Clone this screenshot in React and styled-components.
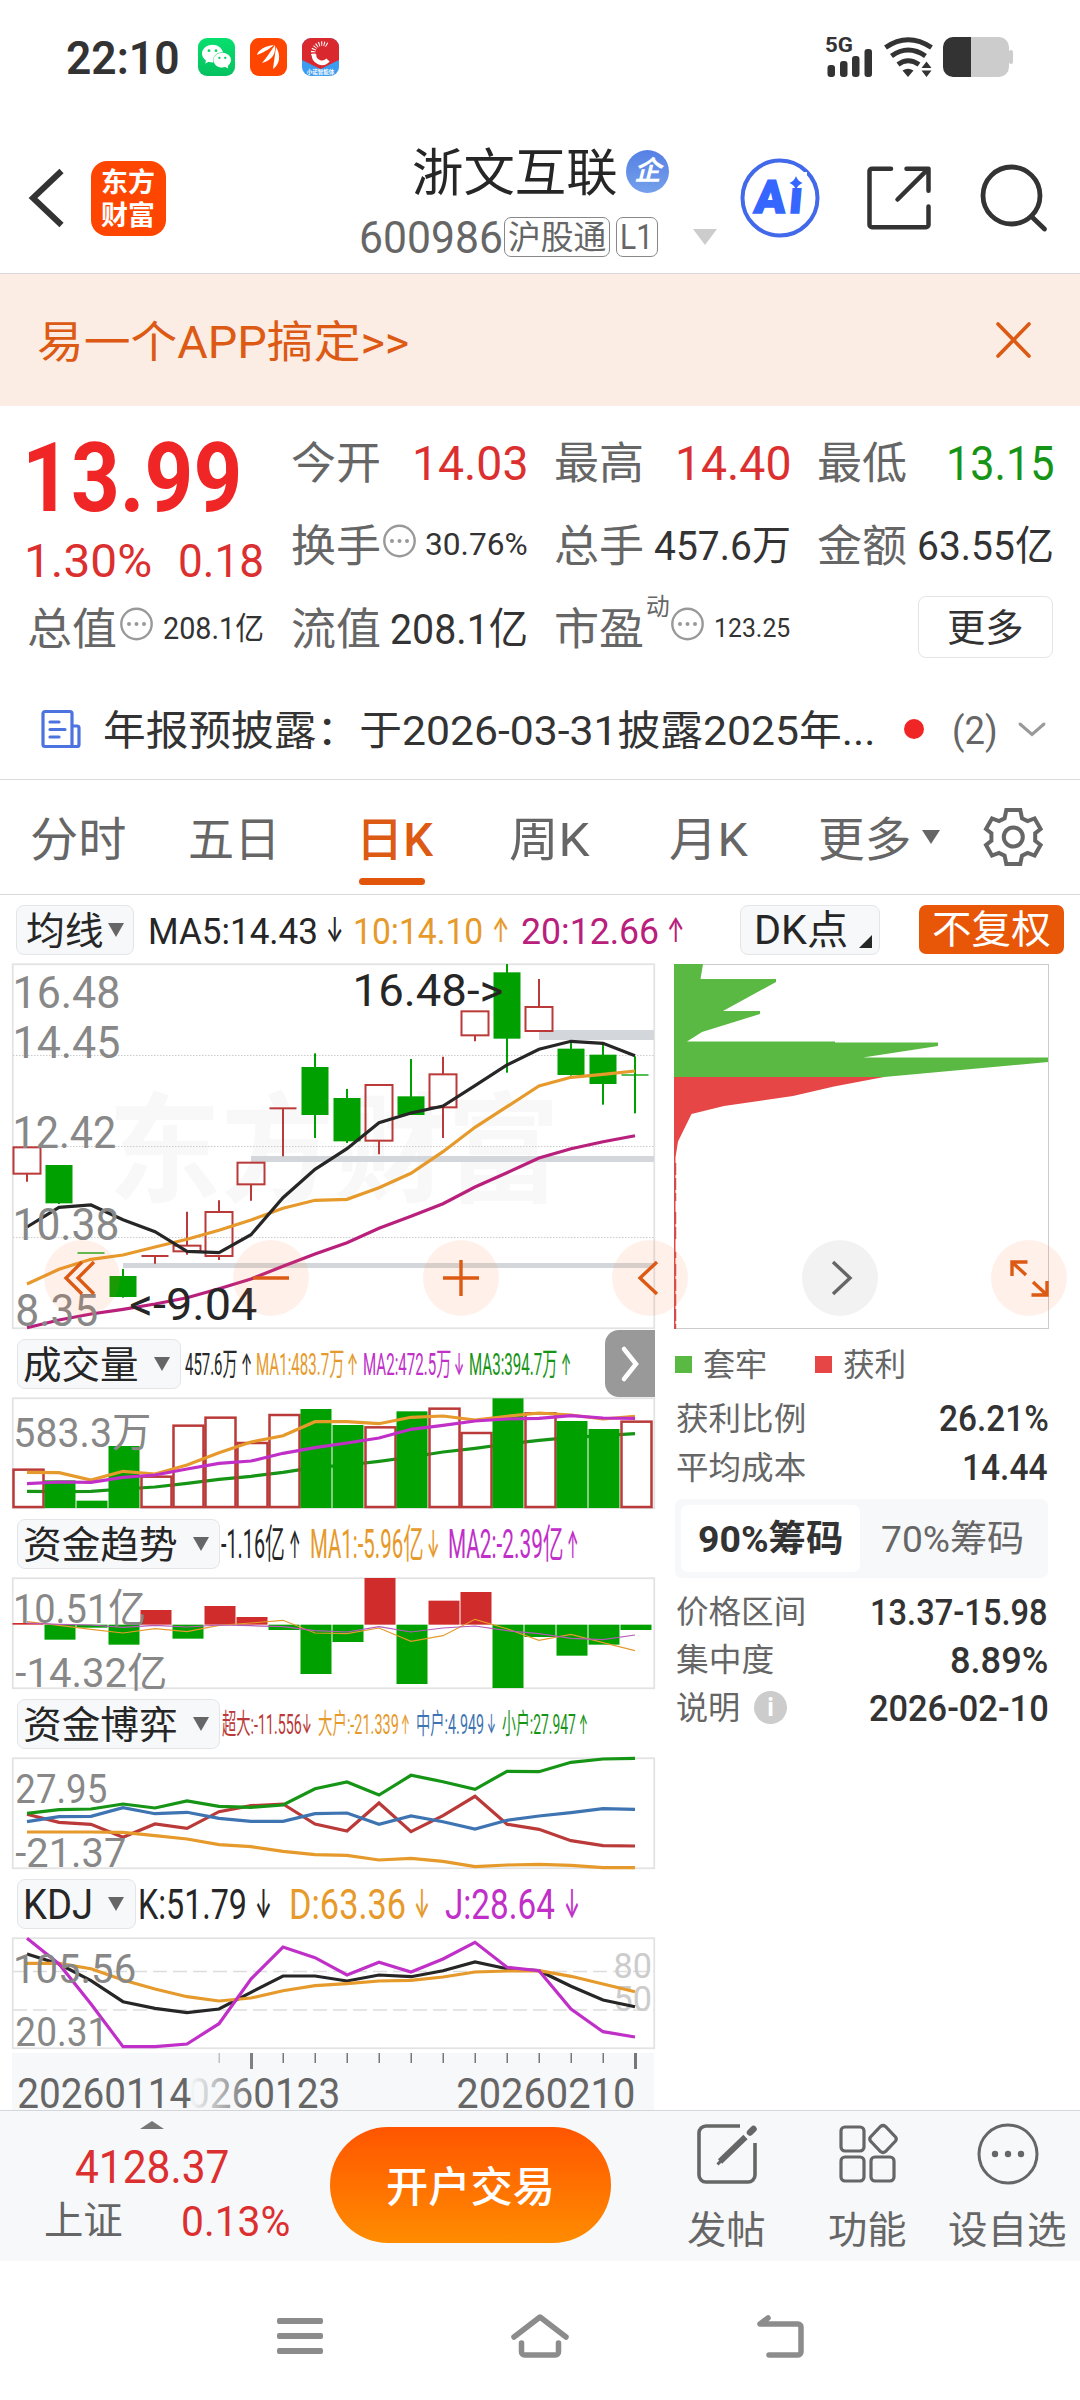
import React, { useLayoutEffect, useRef } from 'react'
import styled, { createGlobalStyle } from 'styled-components'
import { SiWechat } from 'react-icons/si'

const FONT = "Roboto, Inter, 'Noto Sans CJK SC', sans-serif"
const RED = '#dc2f2f'
const GREEN = '#169416'
const CANDLE_GREEN = '#00a000'
const CANDLE_RED = '#b93a38'
const ORANGE = '#e69a2b'
const PURPLE = '#c030c8'
const MAGENTA = '#b8207c'
const BLUE = '#3f74b3'
const DARK = '#262626'
const GREY = '#666'

const GlobalStyle = createGlobalStyle`
    body {
        margin: 0;
        background: #fff;
        font-family: ${FONT};
        color: #333;
    }
    svg {
        display: block;
        flex: none;
        overflow: visible;
    }
`

/* ---------- text that shrinks or grows to its slot ---------- */
const Slot = styled.span`
    display: block;
    flex: none;
    width: ${p => p.$w}px;
    margin-left: ${p => p.$ml || 0}px;
    margin-top: ${p => p.$mt || 0}px;
    font-size: ${p => p.$size}px;
    line-height: ${p => p.$lh || Math.round(p.$size * 1.1)}px;
    height: ${p => p.$lh || Math.round(p.$size * 1.1)}px;
    font-weight: ${p => p.$weight || 400};
    color: ${p => p.$color || 'inherit'};
    white-space: nowrap;
`
const SlotInner = styled.span`
    display: inline-block;
    transform-origin: 0 50%;
    margin-top: 1px;
    margin-left: ${p => p.$lead}em;
    vertical-align: top;
`
// a leading 1 carries a wider side bearing than the other glyphs
const Fit = ({ w, size, color, weight, ml, mt, lh, children }) => {
    const ref = useRef(null)
    const lead = String(children)[0] === '1' ? 0.1 : 0.04
    useLayoutEffect(() => {
        const el = ref.current
        el.style.transform = `scaleX(${(w + size * (lead + 0.03)) / el.offsetWidth})`
    }, [w, size, lead, children])
    return (
        <Slot $w={w} $size={size} $color={color} $weight={weight} $ml={ml} $mt={mt} $lh={lh}>
            <SlotInner ref={ref} $lead={-lead}>{children}</SlotInner>
        </Slot>
    )
}

const Page = styled.div`
    width: 1080px;
    height: 2400px;
    overflow: hidden;
    background: #fff;
    display: flex;
    flex-direction: column;
`

/* ---------- status bar ---------- */
const StatusBar = styled.div`
    display: flex;
    align-items: center;
    height: 114px;
    margin-bottom: 10px;
    padding-left: 68px;
`
const StatusApps = styled.div`
    display: flex;
    gap: 15px;
    margin-left: 20px;
`
const AppDot = styled.div`
    width: 37px;
    height: 38px;
    border-radius: 9px;
    overflow: hidden;
    background: ${p => p.$bg};
    color: #fff;
    display: flex;
    align-items: center;
    justify-content: center;
`
const StatusRight = styled.div`
    display: flex;
    align-items: center;
    gap: 10px;
    margin-left: 487px;
`

const Status = () => (
    <StatusBar>
        <Fit w={110} size={47} weight={600}>22:10</Fit>
        <StatusApps>
            <AppDot $bg='linear-gradient(#07e06e, #06c160)'><SiWechat size={29} /></AppDot>
            <AppDot $bg='#ff4600'>
                <svg width='37' height='38' viewBox='0 0 37 38' fill='#fff'>
                    <path d='M7 17c1-5 8-9 17-10-4 3-7 6-17 10z' />
                    <path d='M12 25c5-6 8-11 13-18 1 8-2 15-13 18z' />
                    <path d='M23 31c1-8 2-14 3-22 5 8 4 17-3 22z' />
                </svg>
            </AppDot>
            <AppDot $bg='#3c9cf0'>
                <svg width='37' height='38' viewBox='0 0 37 38'>
                    <path d='M0 0h37v22L18.500 31 0 22z' fill='#d9292f' />
                    <path d='M25 7a9 9 0 0 0-12 13' fill='none' stroke='#fff' strokeWidth='4.500' strokeDasharray='1 1.500' />
                    <path d='M12 16a8 8 0 0 0 14 6' fill='none' stroke='#fff' strokeWidth='4.500' />
                    <text x='18.500' y='36' fontSize='5.500' fontWeight='700' fill='#fff' textAnchor='middle'>小诺智能体</text>
                </svg>
            </AppDot>
        </StatusApps>
        <StatusRight>
            <svg width='48' height='40' viewBox='0 0 48 40' fill='#333'>
                <text x='-1' y='15' fontSize='21' fontWeight='700' textLength='28' lengthAdjust='spacingAndGlyphs'>5G</text>
                <rect x='1.500' y='28' width='7.500' height='12' rx='3' />
                <rect x='14' y='24' width='7.500' height='16' rx='3' />
                <rect x='26' y='19' width='7.500' height='21' rx='3' />
                <rect x='38.500' y='12' width='7.500' height='28' rx='3' />
            </svg>
            <svg width='49' height='40' viewBox='0 0 49 40' fill='none' stroke='#333' strokeWidth='5'>
                <path d='M1.500 10.500Q24 -5 47.500 10.500' />
                <path d='M7.500 19Q24 7 41.500 19' />
                <path d='M14 27.500Q24 20 35 27.500' />
                <path d='M18.500 33.500Q24 30 29.500 33.500L24 40z' fill='#333' stroke='none' />
                <path d='M37.500 31l5-6.500 5 6.500zM37.500 33.500l5 6.500 5-6.500z' fill='#333' stroke='none' />
            </svg>
            <svg width='71' height='40' viewBox='0 0 71 40'>
                <path d='M28 0h28a10 10 0 0 1 10 10v20a10 10 0 0 1-10 10h-28z' fill='#ccc' />
                <path d='M28 0h-18a10 10 0 0 0-10 10v20a10 10 0 0 0 10 10h18z' fill='#333' />
                <rect x='66' y='13' width='4' height='14' rx='2' fill='#ccc' />
            </svg>
        </StatusRight>
    </StatusBar>
)

/* ---------- title bar ---------- */
const TitleBar = styled.header`
    display: flex;
    align-items: center;
    height: 149px;
    padding-left: 30px;
    border-bottom: 1px solid #d9d9d9;
`
const BrandLogo = styled.div`
    display: flex;
    flex-direction: column;
    align-items: center;
    justify-content: center;
    gap: 1px;
    width: 75px;
    height: 75px;
    margin-left: 27px;
    border-radius: 16px;
    background: #ff4600;
`
const StockBlock = styled.div`
    width: 298px;
    margin-left: 195px;
    margin-top: 12px;
`
const StockLine = styled.div`
    display: flex;
    align-items: center;
    height: 65px;
    padding-left: ${p => p.$pl || 0}px;
`
const Verified = styled.span`
    flex: none;
    width: 43px;
    height: 43px;
    margin-left: 10px;
    border-radius: 50%;
    background: linear-gradient(#5680e4, #74a0ea);
    color: #fff;
    font-size: 27px;
    font-weight: 700;
    font-style: italic;
    line-height: 43px;
    text-align: center;
`
const Tag = styled.span`
    display: flex;
    align-items: center;
    justify-content: center;
    flex: none;
    box-sizing: border-box;
    width: ${p => p.$w}px;
    height: 40px;
    margin-left: ${p => p.$ml}px;
    border: 1.5px solid #888;
    border-radius: 7px;
`
const IconGroup = styled.div`
    display: flex;
    align-items: center;
    margin-left: ${p => p.$ml}px;
`

const Title = () => (
    <TitleBar>
        <svg width='34' height='60' viewBox='0 0 34 60'>
            <path d='M31.500 3L3 30l28.500 27' fill='none' stroke='#333' strokeWidth='6' />
        </svg>
        <BrandLogo>
            <Fit w={52} size={27} lh={32} weight={700} color='#fff'>东方</Fit>
            <Fit w={52} size={27} lh={32} weight={700} color='#fff'>财富</Fit>
        </BrandLogo>
        <StockBlock>
            <StockLine $pl={53}>
                <Fit w={202} size={51} color={DARK} mt={2}>浙文互联</Fit>
                <Verified>企</Verified>
            </StockLine>
            <StockLine>
                <Fit w={141} size={45} color={GREY}>600986</Fit>
                <Tag $w={106} $ml={2}><Fit w={96} size={33} color={GREY}>沪股通</Fit></Tag>
                <Tag $w={42} $ml={6}><Fit w={31} size={35} color={GREY}>L1</Fit></Tag>
            </StockLine>
        </StockBlock>
        <IconGroup $ml={24}>
            <svg width='34' height='93' viewBox='0 0 34 93'>
                <path d='M10 77h24l-12 16z' fill='#ccc' />
            </svg>
        </IconGroup>
        <IconGroup $ml={23}>
            <svg width='80' height='80' viewBox='0 0 80 80'>
                <circle cx='40' cy='40' r='37.500' fill='none' stroke='#4169ea' strokeWidth='4' />
                <text x='13' y='55' fontSize='46' fontWeight='900' fill='#3566ff' stroke='#3566ff' strokeWidth='1.500' textLength='48' transform='translate(5 0) skewX(-5)'>Ai</text>
                <rect x='49' y='14' width='18' height='15' fill='#fff' />
                <path d='M56 18q1.500 5 6.500 7-5 2-6.500 7-1.500-5-6.500-7 5-2 6.500-7z' fill='#3566ff' />
            </svg>
        </IconGroup>
        <IconGroup $ml={47}>
            <svg width='64' height='64' viewBox='0 0 64 64' fill='none' stroke='#333' strokeWidth='4.500' strokeLinecap='round' strokeLinejoin='round'>
                <path d='M24 2.700H5a2.500 2.500 0 0 0-2.500 2.500v53.500a2.500 2.500 0 0 0 2.500 2.500h54a2.500 2.500 0 0 0 2.500-2.500V40.500' />
                <path d='M39.500 2.700h22v22M61 3.200L30.500 33.500' />
            </svg>
        </IconGroup>
        <IconGroup $ml={49}>
            <svg width='68' height='68' viewBox='0 0 68 68' fill='none' stroke='#333' strokeWidth='4.800' strokeLinecap='round'>
                <circle cx='31.500' cy='31.500' r='28.500' />
                <path d='M52 53l12.500 12' />
            </svg>
        </IconGroup>
    </TitleBar>
)

/* ---------- banner ---------- */
const BannerBox = styled.div`
    display: flex;
    align-items: center;
    justify-content: space-between;
    height: 132px;
    padding: 0 49px 0 39px;
    background: #fcede4;
`
const Banner = () => (
    <BannerBox>
        <Fit w={369} size={44} color='#dc5a14' mt={5}>易一个APP搞定&gt;&gt;</Fit>
        <svg width='35' height='36' viewBox='0 0 35 36' stroke='#dc5a14' strokeWidth='3.600' strokeLinecap='round'>
            <path d='M2 2l31 32M33 2L2 34' />
        </svg>
    </BannerBox>
)

/* ---------- quote ---------- */
const QuoteBox = styled.section`
    display: flex;
    gap: 30px;
    box-sizing: border-box;
    height: 274px;
    padding: 14px 27px 0 29px;
`
const PriceCol = styled.div`
    width: 234px;
`
const PriceRow = styled.div`
    display: flex;
    align-items: center;
    height: ${p => p.$h}px;
`
const QuoteGrid = styled.div`
    display: grid;
    grid-template-columns: repeat(3, 234px);
    grid-auto-rows: 83px;
    column-gap: 29px;
`
const Cell = styled.div`
    display: flex;
    align-items: center;
    justify-content: ${p => p.$end ? 'flex-end' : 'flex-start'};
`
const Push = styled.div`
    flex: 1;
`
const MoreButton = styled.button`
    display: flex;
    align-items: center;
    justify-content: center;
    box-sizing: border-box;
    width: 135px;
    height: 62px;
    padding: 0;
    border: 1.5px solid #e4e4e4;
    border-radius: 8px;
    background: #fff;
    color: #333;
    font-family: inherit;
`
const DotsBox = styled.span`
    margin: -6px 0 0 ${p => p.$ml || 0}px;
`
const Dots = ({ ml }) => (
    <DotsBox $ml={ml}>
        <svg width='33' height='34' viewBox='0 0 33 34' fill='#999'>
            <circle cx='16.500' cy='17' r='15.200' fill='none' stroke='#999' strokeWidth='2.400' />
            <circle cx='9' cy='17' r='2' /><circle cx='16.500' cy='17' r='2' /><circle cx='24' cy='17' r='2' />
        </svg>
    </DotsBox>
)
const Label = ({ children }) => <Fit w={87} size={44} color={GREY} mt={4}>{children}</Fit>

const Quote = () => (
    <QuoteBox>
        <PriceCol>
            <PriceRow $h={114}><Fit w={208} size={97} weight={700} color='#f02525' ml={3} lh={110}>13.99</Fit></PriceRow>
            <PriceRow $h={52}>
                <Fit w={122} size={47} color={RED}>1.30%</Fit>
                <Push />
                <Fit w={83} size={47} color={RED}>0.18</Fit>
            </PriceRow>
            <PriceRow $h={83}>
                <Label>总值</Label><Dots ml={4} /><Push /><Fit w={99} size={31} mt={2}>208.1亿</Fit>
            </PriceRow>
        </PriceCol>
        <QuoteGrid>
            <Cell><Label>今开</Label><Push /><Fit w={110} size={49} color={RED} mt={3}>14.03</Fit></Cell>
            <Cell><Label>最高</Label><Push /><Fit w={110} size={49} color={RED} mt={3}>14.40</Fit></Cell>
            <Cell><Label>最低</Label><Push /><Fit w={102} size={49} color={GREEN} mt={3}>13.15</Fit></Cell>
            <Cell><Label>换手</Label><Dots ml={3} /><Push /><Fit w={101} size={31}>30.76%</Fit></Cell>
            <Cell><Label>总手</Label><Push /><Fit w={134} size={41} mt={3}>457.6万</Fit></Cell>
            <Cell><Label>金额</Label><Push /><Fit w={134} size={41} mt={3}>63.55亿</Fit></Cell>
            <Cell><Label>流值</Label><Push /><Fit w={135} size={43} mt={2}>208.1亿</Fit></Cell>
            <Cell>
                <Label>市盈</Label>
                <Fit w={22} size={24} color={GREY} ml={4} mt={-42}>动</Fit>
                <Push /><Dots /><Fit w={73} size={26} ml={13}>123.25</Fit>
            </Cell>
            <Cell $end><MoreButton><Fit w={74} size={38}>更多</Fit></MoreButton></Cell>
        </QuoteGrid>
    </QuoteBox>
)

/* ---------- notice ---------- */
const NoticeBox = styled.div`
    display: flex;
    align-items: center;
    height: 100px;
    padding-left: 41px;
    border-bottom: 1px solid #d9d9d9;
`
const RedDot = styled.span`
    width: 20px;
    height: 20px;
    margin: 0 30px 0 29px;
    border-radius: 50%;
    background: #f02525;
`
const Chevron = styled.span`
    margin-left: 21px;
`
const Notice = () => (
    <NoticeBox>
        <svg width='40' height='40' viewBox='0 0 40 40' fill='none' stroke='#4d73e0' strokeWidth='3.200' strokeLinejoin='round' strokeLinecap='round'>
            <path d='M37 37.500H4a2 2 0 0 1-2-2V4.500a2 2 0 0 1 2-2h25a2 2 0 0 1 2 2v33M31 17h5a2 2 0 0 1 2 2v16.500a2 2 0 0 1-2 2' />
            <path d='M9 13h9M9 20.500h15M9 28h9' />
        </svg>
        <Fit w={770} size={41} ml={24} mt={2}>年报预披露：于2026-03-31披露2025年...</Fit>
        <RedDot />
        <Fit w={43} size={39} color={GREY} mt={2}>(2)</Fit>
        <Chevron>
            <svg width='28' height='16' viewBox='0 0 28 16' fill='none' stroke='#999' strokeWidth='3' strokeLinecap='round'>
                <path d='M2 3l12 10.500L26 3' />
            </svg>
        </Chevron>
    </NoticeBox>
)

/* ---------- period tabs ---------- */
const TabsBox = styled.nav`
    display: flex;
    align-items: center;
    height: 114px;
    border-bottom: 1px solid #d9d9d9;
`
const TabItem = styled.div`
    position: relative;
    display: flex;
    align-items: center;
    margin-left: ${p => p.$ml}px;
    color: ${p => p.$active ? '#dc5a14' : GREY};
    font-weight: ${p => p.$active ? 500 : 400};
`
const Underline = styled.i`
    position: absolute;
    left: 1px;
    bottom: -20px;
    width: 66px;
    height: 7px;
    border-radius: 4px;
    background: #e2560c;
`
const TabTools = styled.div`
    display: flex;
    align-items: center;
    gap: 45px;
    margin-left: 12px;
`
const TABS = [
    { name: '分时', w: 93, ml: 32 },
    { name: '五日', w: 89, ml: 65 },
    { name: '日K', w: 74, ml: 79, active: true },
    { name: '周K', w: 78, ml: 79 },
    { name: '月K', w: 76, ml: 82 },
    { name: '更多', w: 90, ml: 73 },
]
const Tabs = () => (
    <TabsBox>
        {TABS.map(tab => (
            <TabItem key={tab.name} $ml={tab.ml} $active={tab.active}>
                <Fit w={tab.w} size={47} mt={4} weight={tab.active ? 500 : 400}>{tab.name}</Fit>
                {tab.active && <Underline />}
            </TabItem>
        ))}
        <TabTools>
            <svg width='18' height='14' viewBox='0 0 18 14'><path d='M0 0h18l-9 14z' fill='#666' /></svg>
            <svg width='57' height='58' viewBox='0 0 57 58' fill='none' stroke='#666' strokeWidth='4'>
                <path d='M21.300 2h14l1.700 8.300 5.600 2.800 7-2.600 6 10.500-5.400 4.300v7.400l5.400 4.300-6 10.500-7-2.600-5.600 2.800-1.700 8.300h-14l-1.700-8.300-5.600-2.800-7 2.600-6-10.500 5.400-4.300v-7.400l-5.400-4.300 6-10.500 7 2.600 5.600-2.800z' />
                <circle cx='28.300' cy='29' r='9.500' />
            </svg>
        </TabTools>
    </TabsBox>
)

/* ---------- indicator rows ---------- */
const IndicatorRow = styled.div`
    position: relative;
    display: flex;
    align-items: center;
    height: 69px;
    padding-left: ${p => p.$pl}px;
`
const Picker = styled.div`
    display: flex;
    align-items: center;
    flex: none;
    box-sizing: border-box;
    width: ${p => p.$w}px;
    height: 50px;
    margin-left: ${p => p.$ml || 0}px;
    padding-left: ${p => p.$pl || 7}px;
    border: 1.5px solid #e3e5e8;
    border-radius: 8px;
    background: #f7f8fa;
    color: ${DARK};
`
const Arrow = styled.span`
    margin-left: ${p => p.$ml}px;
`
const OrangeTag = styled.div`
    display: flex;
    align-items: center;
    justify-content: center;
    width: 145px;
    height: 49px;
    margin-left: 39px;
    border-radius: 7px;
    background: #e85608;
`
const SideTab = styled.div`
    position: absolute;
    right: 0;
    top: 1px;
    display: flex;
    align-items: center;
    justify-content: center;
    width: 50px;
    height: 67px;
    border-radius: 14px 0 0 14px;
    background: #999;
`
const Triangle = ({ ml }) => (
    <Arrow $ml={ml}>
        <svg width='16' height='14' viewBox='0 0 16 14'><path d='M0 0h16l-8 14z' fill='#666' /></svg>
    </Arrow>
)

const MaRow = () => (
    <IndicatorRow $pl={16}>
        <Picker $w={118} $pl={11}><Fit w={75} size={38}>均线</Fit><Triangle ml={5} /></Picker>
        <Fit w={167} size={37} color={DARK} ml={15} mt={1}>MA5:14.43</Fit>
        <Fit w={15} size={34} color={DARK} ml={11} weight={500}>↓</Fit>
        <Fit w={125} size={37} color={ORANGE} ml={15} mt={1}>10:14.10</Fit>
        <Fit w={15} size={34} color={ORANGE} ml={11} weight={500}>↑</Fit>
        <Fit w={135} size={37} color={MAGENTA} ml={14} mt={1}>20:12.66</Fit>
        <Fit w={15} size={34} color={MAGENTA} ml={11} weight={500}>↑</Fit>
        <Picker $w={140} $pl={15} $ml={57}>
            <Fit w={91} size={40}>DK点</Fit>
            <Arrow $ml={12}>
                <svg width='13' height='40' viewBox='0 0 13 40'><path d='M13 25v13H0z' fill='#262626' /></svg>
            </Arrow>
        </Picker>
        <OrangeTag><Fit w={116} size={39} color='#fff'>不复权</Fit></OrangeTag>
    </IndicatorRow>
)

// items: [text, text width, left gap, colour, arrow, arrow gap, arrow width]
const Indicator = ({ name, nameW, pickerW, gap, size, items, side }) => (
    <IndicatorRow $pl={5}>
        <Picker $w={pickerW}><Fit w={nameW} size={name === 'KDJ' ? 42 : 38}>{name}</Fit><Triangle ml={16} /></Picker>
        {items.map(([text, w, ml, color, arrow, aGap, aW], i) => (
            <React.Fragment key={text}>
                <Fit w={w} size={size} color={color} ml={i === 0 ? gap : ml}>{text}</Fit>
                <Fit w={aW} size={size * 0.95} color={color} ml={aGap} weight={500}>{arrow}</Fit>
            </React.Fragment>
        ))}
        {side && (
            <SideTab>
                <svg width='20' height='38' viewBox='0 0 20 38' fill='none' stroke='#fff' strokeWidth='4.500' strokeLinecap='round'>
                    <path d='M4 4l12 15L4 34' />
                </svg>
            </SideTab>
        )}
    </IndicatorRow>
)

/* ---------- charts ---------- */
// plot data is kept in thirds of a pixel, measured down from each panel's own origin
const PITCH = 32
const cx = i => 15 + PITCH * i
const points = (data, top) => data.map((v, i) => `${cx(i)},${((v - top) / 3).toFixed(1)}`).join(' ')
const Line = ({ data, top, color, w = 3.2 }) => (
    <polyline points={points(data, top)} fill='none' stroke={color} strokeWidth={w} />
)
const AxisText = ({ x = 5, y, w, size = 41, color = '#888', children }) => {
    const lead = String(children)[0] === '1' ? 0.1 : 0.04
    return (
        <text x={x - size * lead} y={y} fontSize={size} fill={color} textLength={w + size * (lead + 0.03)} lengthAdjust='spacingAndGlyphs'>{children}</text>
    )
}
const Frame = ({ h }) => <rect x='0.750' y='0.250' width='641.500' height={h - 1} fill='none' stroke='#e3e3e3' strokeWidth='1.800' />

// [direction, body top, body bottom, high, low]
const CANDLES = [
    ['r', 565, 644, 565, 668], ['g', 618, 733, 618, 735], ['g', 880, 884, 882, 882], ['g', 951, 1014, 930, 1016],
    ['r', 891, 891, 891, 914], ['r', 860, 877, 758, 887], ['r', 759, 891, 724, 903], ['r', 611, 676, 611, 725],
    ['r', 448, 448, 448, 592], ['g', 324, 468, 283, 537], ['g', 417, 547, 390, 552], ['r', 378, 545, 378, 586],
    ['g', 412, 468, 300, 468], ['r', 346, 445, 293, 537], ['r', 157, 229, 157, 247], ['g', 40, 239, 15, 341],
    ['r', 144, 216, 60, 216], ['g', 269, 348, 248, 350], ['g', 287, 375, 253, 437], ['g', 346, 350, 292, 463],
]
const MA5 = [804, 745, 738, 782, 818, 877, 881, 827, 716, 631, 569, 491, 462, 441, 380, 318, 271, 247, 253, 290]
const MA10 = [975, 931, 901, 888, 864, 841, 814, 783, 748, 724, 721, 686, 643, 578, 505, 443, 381, 355, 346, 336]
const MA20 = [1106, 1083, 1065, 1051, 1035, 1016, 989, 960, 922, 885, 851, 808, 772, 734, 684, 641, 597, 569, 548, 530]

const Candle = ({ i, c }) => {
    const [dir, top, bottom, high, low] = c
    const y = v => (v - 15) / 3
    const x = cx(i)
    if (dir === 'g') {
        return (
            <g fill={CANDLE_GREEN}>
                <rect x={x - 1} y={y(high)} width='2' height={y(low) - y(high)} />
                <rect x={x - 13.5} y={y(top)} width='27' height={y(bottom) - y(top)} />
            </g>
        )
    }
    return (
        <g fill='none' stroke={CANDLE_RED} strokeWidth='2'>
            <path d={`M${x} ${y(high)}V${y(top)}M${x} ${y(bottom)}V${y(low)}`} />
            {top === bottom
                ? <path d={`M${x - 13.5} ${y(top)}h27`} />
                : <rect x={x - 13.5} y={y(top)} width='27' height={y(bottom) - y(top)} />}
        </g>
    )
}

const KChart = () => (
    <svg width='643' height='365' viewBox='0 0 643 365'>
        <Frame h={365} />
        <text x='96' y='229' fontSize='119' fontWeight='700' fill='#f8f8f8' textLength='452' lengthAdjust='spacingAndGlyphs'>东方财富</text>
        {[91, 182, 273].map(y => <path key={y} d={`M1 ${y}.500H642`} stroke='#ccc' strokeWidth='1' strokeDasharray='1.500 1.500' />)}
        <g fill='#d3d7db'>
            <rect x='527' y='66' width='115' height='10' />
            <rect x='239' y='192' width='403' height='6' />
            <rect x='111' y='299' width='531' height='5' />
        </g>
        {CANDLES.map((c, i) => <Candle key={i} i={i} c={c} />)}
        <Line data={MA20} top={15} color={MAGENTA} />
        <Line data={MA10} top={15} color={ORANGE} />
        <Line data={MA5} top={15} color={DARK} />
        <AxisText y={44} w={102} size={45}>16.48</AxisText>
        <AxisText y={94} w={102} size={45}>14.45</AxisText>
        <AxisText y={184} w={98} size={45}>12.42</AxisText>
        <AxisText y={276} w={101} size={45}>10.38</AxisText>
        <AxisText y={362} w={80} size={45}>8.35</AxisText>
        <AxisText x={345} y={41.5} w={145} size={44} color={DARK}>16.48-&gt;</AxisText>
        <AxisText x={119} y={356} w={125} size={44} color={DARK}>&lt;-9.04</AxisText>
    </svg>
)

const ChipChart = () => (
    <svg width='375' height='365' viewBox='0 0 375 365'>
        <rect x='0.500' y='0.500' width='374' height='364' fill='none' stroke='#ccc' />
        <path fill='#5ab943' d='M0 0H29L26.500 15H102V18L49 47H86V50L28 68 13 77.500H161V78.500H264V82L189 93.500H374V98L358 99.600 210 113H0z' />
        <path fill='#e64646' d='M0 113H210L160 122.500 119 132 50 142 17.500 150 4 177.500 1.500 193.600V365H0z' />
        <path d='M1.500 199v38M1.500 248v30M1.500 288v6M1.500 300v65' stroke='#c85050' strokeWidth='1.500' strokeDasharray='12 3' />
    </svg>
)

const Bar = ({ i, y, h, red }) => (
    <rect x={PITCH * i + 0.5} y={y} width='31' height={h} fill={red ? '#d02c2c' : CANDLE_GREEN} />
)

const VOLUME = [
    ['r', 419], ['g', 454], ['g', 515], ['g', 351], ['r', 440], ['r', 287], ['r', 263], ['r', 339], ['r', 255], ['g', 240],
    ['g', 288], ['r', 292], ['g', 247], ['r', 236], ['r', 309], ['g', 208], ['r', 250], ['g', 276], ['g', 300], ['r', 275],
]
const VolumeChart = () => (
    <svg width='643' height='111' viewBox='0 0 643 111'>
        <Frame h={111} />
        <Line data={[487, 488, 487, 480, 474, 463, 451, 442, 430, 415, 408, 397, 384, 369, 358, 345, 334, 325, 320, 314]} top={207} color={GREEN} />
        {VOLUME.map(([dir, v], i) => {
            const y = (v - 207) / 3
            return dir === 'r'
                ? <rect key={i} x={PITCH * i + 1.5} y={y + 1} width='30' height={108 - y} fill='none' stroke={CANDLE_RED} strokeWidth='2.500' />
                : <Bar key={i} i={i} y={y} h={110 - y} />
        })}
        <Line data={[430, 431, 453, 427, 435, 408, 371, 339, 320, 278, 278, 284, 265, 261, 273, 262, 252, 258, 270, 262]} top={207} color={ORANGE} />
        <Line data={[464, 459, 460, 445, 438, 420, 403, 396, 373, 356, 342, 327, 301, 289, 276, 270, 268, 260, 267, 268]} top={207} color={PURPLE} />
        <AxisText x={3} y={49} w={135}>583.3万</AxisText>
    </svg>
)

// bar ends, the zero line is at 886
const FLOW = [882, 932, 896, 947, 843, 929, 831, 864, 903, 1035, 939, 747, 1065, 815, 789, 1077, 924, 980, 947, 903]
const FlowChart = () => (
    <svg width='643' height='111' viewBox='0 0 643 111'>
        <Frame h={111} />
        {FLOW.map((v, i) => {
            const up = v < 886
            return <Bar key={i} i={i} red={up} y={(Math.min(v, 887) - 747) / 3} h={Math.abs(v - 887) / 3} />
        })}
        <Line data={[878, 889, 901, 912, 899, 908, 889, 882, 874, 912, 914, 897, 937, 920, 871, 899, 934, 916, 941, 965]} top={747} color={ORANGE} w={1.2} />
        <Line data={[882, 886, 888, 895, 889, 894, 888, 890, 893, 905, 909, 893, 909, 897, 891, 905, 914, 928, 932, 918]} top={747} color='#b45ab8' w={1.2} />
        <AxisText y={45} w={128}>10.51亿</AxisText>
        <AxisText y={109} w={149}>-14.32亿</AxisText>
    </svg>
)

const GameChart = () => (
    <svg width='643' height='111' viewBox='0 0 643 111'>
        <Frame h={111} />
        <Line data={[346, 370, 376, 415, 375, 388, 338, 320, 315, 375, 396, 312, 398, 350, 292, 376, 391, 425, 440, 441]} top={177} color={CANDLE_RED} />
        <Line data={[399, 399, 399, 400, 410, 420, 437, 443, 457, 467, 469, 483, 478, 487, 503, 498, 496, 499, 506, 506]} top={177} color={ORANGE} />
        <Line data={[368, 353, 352, 326, 344, 340, 358, 367, 367, 344, 342, 376, 351, 368, 390, 364, 351, 341, 329, 331]} top={177} color={BLUE} />
        <Line data={[343, 332, 330, 315, 327, 306, 322, 325, 318, 269, 249, 288, 229, 248, 271, 217, 218, 190, 180, 178]} top={177} color={GREEN} />
        <AxisText y={45} w={89}>27.95</AxisText>
        <AxisText y={109} w={108}>-21.37</AxisText>
    </svg>
)

const KdjChart = () => (
    <svg width='643' height='111' viewBox='0 0 643 111'>
        <Frame h={111} />
        <path d='M1 33.500H642M1 72H642' stroke='#ddd' strokeWidth='1.500' strokeDasharray='14 6' />
        <AxisText x={603} y={40} w={36} size={35} color='#ccc'>80</AxisText>
        <AxisText x={603} y={73} w={36} size={35} color='#ccc'>50</AxisText>
        <Line data={[765, 795, 845, 908, 928, 941, 930, 880, 831, 831, 846, 828, 833, 815, 789, 809, 815, 862, 903, 923]} top={717} color={DARK} />
        <Line data={[793, 793, 809, 843, 870, 893, 906, 897, 875, 860, 854, 846, 844, 834, 819, 816, 815, 832, 855, 878]} top={717} color={ORANGE} />
        <Line data={[718, 795, 915, 1043, 1043, 1035, 974, 840, 744, 776, 828, 790, 819, 780, 730, 805, 815, 930, 998, 1014]} top={717} color={PURPLE} />
        <AxisText y={45} w={118}>105.56</AxisText>
        <AxisText y={108} w={90}>20.31</AxisText>
    </svg>
)

const DateAxisBox = styled.div`
    width: 642px;
    height: 57px;
    margin-top: 4px;
    background: #f7f8fa;
`
const DateAxis = () => (
    <DateAxisBox>
        <svg width='642' height='57' viewBox='0 0 642 57'>
            <defs>
                <linearGradient id='fade' x1='0' x2='1'>
                    <stop offset='0' stopColor='#f7f8fa' />
                    <stop offset='1' stopColor='#f7f8fa' stopOpacity='0' />
                </linearGradient>
            </defs>
            {Array.from({ length: 14 }, (_, k) => {
                const tall = k === 1 || k === 13
                return <rect key={k} x={cx(k + 6) - (tall ? 1 : 0.5)} y='0' width={tall ? 3 : 1.5} height={tall ? 16 : 10} fill='#777' />
            })}
            <AxisText x={156} y={54.5} w={171} size={42} color={GREY}>20260123</AxisText>
            <rect x='140' y='0' width='38' height='57' fill='#f7f8fa' />
            <rect x='178' y='0' width='66' height='57' fill='url(#fade)' />
            <AxisText x={7} y={54.5} w={171} size={42} color={GREY}>20260114</AxisText>
            <AxisText x={446} y={54.5} w={176} size={42} color={GREY}>20260210</AxisText>
        </svg>
    </DateAxisBox>
)

/* ---------- chip panel ---------- */
const Main = styled.main`
    position: relative;
    display: flex;
    height: 1146px;
`
const LeftCol = styled.div`
    width: 643px;
    margin-left: 12px;
`
const RightCol = styled.div`
    width: 375px;
    margin-left: 19px;
`
const ChipLegend = styled.div`
    display: flex;
    align-items: center;
    height: 58px;
    padding: 6px 0 0 1px;
`
const LegendItem = styled.div`
    display: flex;
    align-items: center;
    width: 140px;
`
const Square = styled.i`
    width: 17px;
    height: 17px;
    margin-right: 12px;
    background: ${p => p.$color};
`
const ChipRow = styled.div`
    display: flex;
    align-items: center;
    height: ${p => p.$h}px;
    padding: 0 2px 0 3px;
`
const Toggle = styled.div`
    display: flex;
    align-items: center;
    box-sizing: border-box;
    height: 79px;
    margin: 8px 1px 9px;
    padding: 6px;
    border-radius: 7px;
    background: #f7f8fa;
`
const ToggleItem = styled.div`
    display: flex;
    align-items: center;
    justify-content: center;
    width: 180px;
    height: 67px;
    padding-left: ${p => p.$active ? 0 : 3}px;
    border-radius: 7px;
    background: ${p => p.$active ? '#fff' : 'transparent'};
`
const InfoDot = styled.span`
    width: 33px;
    height: 33px;
    margin-left: 15px;
    border-radius: 50%;
    background: #ccc;
    color: #fff;
    font-size: 25px;
    font-weight: 700;
    line-height: 33px;
    text-align: center;
`
const Stat = ({ h, label, lw, value, vw, info }) => (
    <ChipRow $h={h}>
        <Fit w={lw} size={32} color={GREY} mt={1}>{label}</Fit>
        {info && <InfoDot>i</InfoDot>}
        <Push />
        <Fit w={vw} size={36} weight={500} mt={1}>{value}</Fit>
    </ChipRow>
)

/* ---------- floating chart controls ---------- */
const Controls = styled.div`
    position: absolute;
    left: 44px;
    top: 276px;
    display: flex;
    gap: 113.400px;
`
const RoundButton = styled.div`
    width: 76px;
    height: 76px;
    border-radius: 50%;
    background: ${p => p.$grey ? 'rgba(0,0,0,0.050)' : 'rgba(255,115,50,0.100)'};
    color: ${p => p.$grey ? '#666' : '#dc5a14'};
`
const ICONS = [
    'M38 22L22 38l16 16M50 22L34 38l16 16',
    'M20 38h36',
    'M20 38h36M38 20v36',
    'M45 22L28 38l17 16',
    'M31 22l17 16-17 16',
    'M21 36V22h15.500M21.500 22.500L35 35M56 41v14H40.500M55.500 54.500L42 42',
]

/* ---------- bottom bar ---------- */
const BottomBar = styled.div`
    display: flex;
    height: 150px;
    border-top: 1px solid #d4d6da;
    background: #f7f8fa;
`
const IndexBox = styled.div`
    width: 243px;
    margin-left: 46px;
    padding-top: 10px;
`
const IndexHint = styled.div`
    margin-left: 94px;
`
const IndexRow = styled.div`
    display: flex;
    align-items: center;
    justify-content: space-between;
`
const TradeButton = styled.div`
    display: flex;
    align-items: center;
    justify-content: center;
    width: 281px;
    height: 116px;
    margin: 16px 0 0 41px;
    border-radius: 58px;
    background: linear-gradient(#ff5500, #ff8c00);
`
const Action = styled.div`
    display: flex;
    flex-direction: column;
    align-items: center;
    width: ${p => p.$w}px;
    margin-left: ${p => p.$ml}px;
    padding-top: 12px;
`
const SystemNav = styled.div`
    display: flex;
    align-items: center;
    gap: 187.500px;
    height: 128px;
    padding: 11px 0 0 277px;
`

const Bottom = () => (
    <BottomBar>
        <IndexBox>
            <IndexHint>
                <svg width='24' height='8' viewBox='0 0 24 8'><path d='M0 8L12 0l12 8z' fill='#777' /></svg>
            </IndexHint>
            <Fit w={151} size={46} color={RED} ml={31} mt={12} lh={51}>4128.37</Fit>
            <IndexRow>
                <Fit w={76} size={39} color={GREY} lh={56}>上证</Fit>
                <Fit w={106} size={43} color={RED} lh={56}>0.13%</Fit>
            </IndexRow>
        </IndexBox>
        <TradeButton><Fit w={166} size={42} weight={500} color='#fff' mt={4}>开户交易</Fit></TradeButton>
        <Action $w={76} $ml={78}>
            <svg width='62' height='62' viewBox='0 0 62 62' fill='none' stroke='#666' strokeWidth='3.600'>
                <path d='M44 3H10a7 7 0 0 0-7 7v42a7 7 0 0 0 7 7h42a7 7 0 0 0 7-7V20' />
                <path d='M49.500 14L24 38.500' strokeWidth='6' />
                <path d='M27.500 35L21.500 41.500' strokeWidth='3' />
                <path d='M54 9.500L57.500 6' strokeWidth='6.500' strokeLinecap='round' />
            </svg>
            <Fit w={76} size={38} color={GREY} mt={23}>发帖</Fit>
        </Action>
        <Action $w={76} $ml={65}>
            <svg width='62' height='62' viewBox='0 0 62 62' fill='none' stroke='#666' strokeWidth='3.200'>
                <rect x='4' y='4' width='23' height='24' rx='4' />
                <rect x='4' y='34' width='23' height='24' rx='4' />
                <rect x='34' y='34' width='23' height='24' rx='4' />
                <path d='M43.500 3.500q2.500-2 5 0l10 10.500q1.500 2 0 4l-10 10.500q-2.500 2-5 0l-10-10.500q-1.500-2 0-4z' />
            </svg>
            <Fit w={76} size={38} color={GREY} mt={23}>功能</Fit>
        </Action>
        <Action $w={118} $ml={43}>
            <svg width='62' height='62' viewBox='0 0 62 62' fill='#666'>
                <circle cx='31' cy='31' r='29' fill='none' stroke='#666' strokeWidth='3' />
                <circle cx='18' cy='31' r='3.200' /><circle cx='31' cy='31' r='3.200' /><circle cx='44' cy='31' r='3.200' />
            </svg>
            <Fit w={116} size={38} color={GREY} mt={23}>设自选</Fit>
        </Action>
    </BottomBar>
)

const System = () => (
    <SystemNav>
        <svg width='46' height='38' viewBox='0 0 46 38' fill='#8c8c8c'>
            <rect y='1' width='46' height='6' rx='2' /><rect y='16' width='46' height='6' rx='2' /><rect y='31' width='46' height='6' rx='2' />
        </svg>
        <svg width='58' height='44' viewBox='0 0 58 44' fill='none' stroke='#8c8c8c' strokeWidth='5.500' strokeLinecap='round' strokeLinejoin='round'>
            <path d='M3 23L29 3l26 20' />
            <path d='M10.500 29v9a3 3 0 0 0 3 3h31a3 3 0 0 0 3-3v-9' />
        </svg>
        <svg width='50' height='44' viewBox='0 0 50 44' fill='none' stroke='#8c8c8c' strokeWidth='5.500' strokeLinecap='round' strokeLinejoin='round'>
            <path d='M12 4L4 10h38a3 3 0 0 1 3 3v25a3 3 0 0 1-3 3H13' />
        </svg>
    </SystemNav>
)

const App = () => {
    return (
        <Page>
            <GlobalStyle />
            <Status />
            <Title />
            <Banner />
            <Quote />
            <Notice />
            <Tabs />
            <MaRow />
            <Main>
                <LeftCol>
                    <KChart />
                    <Indicator name='成交量' nameW={113} pickerW={164} gap={5} size={32} side items={[
                        ['457.6万', 50, 0, DARK, '↑', 6, 9],
                        ['MA1:483.7万', 86, 6, ORANGE, '↑', 5, 9],
                        ['MA2:472.5万', 86, 7, PURPLE, '↓', 5, 8],
                        ['MA3:394.7万', 86, 7, GREEN, '↑', 6, 8],
                    ]} />
                    <VolumeChart />
                    <Indicator name='资金趋势' nameW={152} pickerW={203} gap={3} size={40} items={[
                        ['-1.16亿', 61, 0, DARK, '↑', 7, 9],
                        ['MA1:-5.96亿', 111, 12, ORANGE, '↓', 6, 10],
                        ['MA2:-2.39亿', 113, 11, PURPLE, '↑', 6, 9],
                    ]} />
                    <FlowChart />
                    <Indicator name='资金博弈' nameW={152} pickerW={203} gap={3} size={28} items={[
                        ['超大:-11.556', 78, 0, CANDLE_RED, '↓', 2, 8],
                        ['大户:-21.339', 79, 8, ORANGE, '↑', 4, 7],
                        ['中户:4.949', 66, 8, BLUE, '↓', 5, 7],
                        ['小户:27.947', 72, 8, GREEN, '↑', 5, 7],
                    ]} />
                    <GameChart />
                    <Indicator name='KDJ' nameW={67} pickerW={119} gap={4} size={42} items={[
                        ['K:51.79', 106, 0, DARK, '↓', 11, 14],
                        ['D:63.36', 114, 20, ORANGE, '↓', 11, 13],
                        ['J:28.64', 107, 18, PURPLE, '↓', 12, 13],
                    ]} />
                    <KdjChart />
                    <DateAxis />
                </LeftCol>
                <RightCol>
                    <ChipChart />
                    <ChipLegend>
                        <LegendItem><Square $color='#5ab943' /><Fit w={62} size={32} color={GREY}>套牢</Fit></LegendItem>
                        <LegendItem><Square $color='#e64646' /><Fit w={61} size={32} color={GREY}>获利</Fit></LegendItem>
                    </ChipLegend>
                    <Stat h={49} label='获利比例' lw={128} value='26.21%' vw={107} />
                    <Stat h={49} label='平均成本' lw={128} value='14.44' vw={81} />
                    <Toggle>
                        <ToggleItem $active><Fit w={143} size={37} weight={700}>90%筹码</Fit></ToggleItem>
                        <ToggleItem><Fit w={141} size={37} color={GREY}>70%筹码</Fit></ToggleItem>
                    </Toggle>
                    <Stat h={48} label='价格区间' lw={128} value='13.37-15.98' vw={173} />
                    <Stat h={48} label='集中度' lw={96} value='8.89%' vw={96} />
                    <Stat h={48} label='说明' lw={62} value='2026-02-10' vw={177} info />
                </RightCol>
                <Controls>
                    {ICONS.map((d, i) => (
                        <RoundButton key={d} $grey={i === 4}>
                            <svg width='76' height='76' viewBox='0 0 76 76' fill='none' stroke='currentColor' strokeWidth='3.400'><path d={d} /></svg>
                        </RoundButton>
                    ))}
                </Controls>
            </Main>
            <Bottom />
            <System />
        </Page>
    )
}

export default App
